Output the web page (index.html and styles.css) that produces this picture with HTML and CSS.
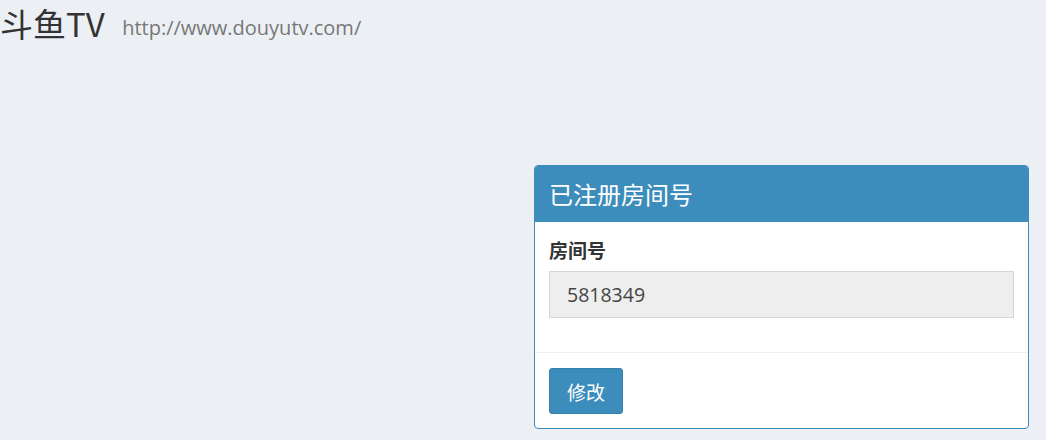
FILE: index.html
```html
<!DOCTYPE html>
<html lang="zh">
<head>
<meta charset="utf-8">
<link rel="stylesheet" href="styles.css">
</head>
<body>
<h1 class="page-title">斗鱼TV <small class="page-url">http://www.douyutv.com/</small></h1>
<div class="row">
  <div class="panel">
    <div class="panel-heading">已注册房间号</div>
    <div class="panel-body">
      <label class="field-label">房间号</label>
      <div class="field-input">5818349</div>
    </div>
    <div class="panel-footer">
      <button class="btn">修改</button>
    </div>
  </div>
</div>
</body>
</html>
```
FILE: styles.css
```css
html, body {
  margin: 0;
  padding: 0;
  background: #ecf0f5;
  font-family: "Open Sans", "Noto Sans CJK SC", sans-serif;
  color: #333;
}
.page-title {
  margin: 0;
  padding: 0;
  font-weight: normal;
  font-size: 33px;
  line-height: 46px;
  height: 44px;
  color: #333;
  font-family: "Noto Sans CJK SC", sans-serif;
}
.page-url {
  font-family: "Open Sans", sans-serif;
  font-size: 20px;
  color: #777;
  margin-left: 10px;
  font-weight: normal;
  vertical-align: 2px;
}
.row {
  display: flex;
  justify-content: flex-end;
  padding-top: 121px;
  padding-right: 17px;
}
.panel {
  width: 493px;
  background: #fff;
  border: 1px solid #3c8dbc;
  border-radius: 4px;
  overflow: hidden;
}
.panel-heading {
  background: #3c8dbc;
  color: #fff;
  font-family: "Noto Sans CJK SC", sans-serif;
  font-size: 24px;
  height: 56px;
  line-height: 56px;
  padding: 0 14px;
}
.panel-body {
  padding: 16px 14px 34px;
  display: flex;
  flex-direction: column;
}
.field-label {
  font-family: "Noto Sans CJK SC", sans-serif;
  font-weight: bold;
  font-size: 19px;
  line-height: 24px;
  margin-bottom: 9px;
}
.field-input {
  height: 45px;
  line-height: 45px;
  background: #eeeeee;
  border: 1px solid #d2d6de;
  padding: 0 17px;
  font-size: 19.5px;
  color: #444;
}
.panel-footer {
  border-top: 1px solid #f0f0f0;
  padding: 15px 14px 14px;
}
.btn {
  background: #3c8dbc;
  border: 1px solid #367fa9;
  border-radius: 3px;
  color: #fff;
  font-family: "Noto Sans CJK SC", sans-serif;
  font-size: 19px;
  width: 74px;
  height: 46px;
  padding: 0;
  display: block;
}
```
